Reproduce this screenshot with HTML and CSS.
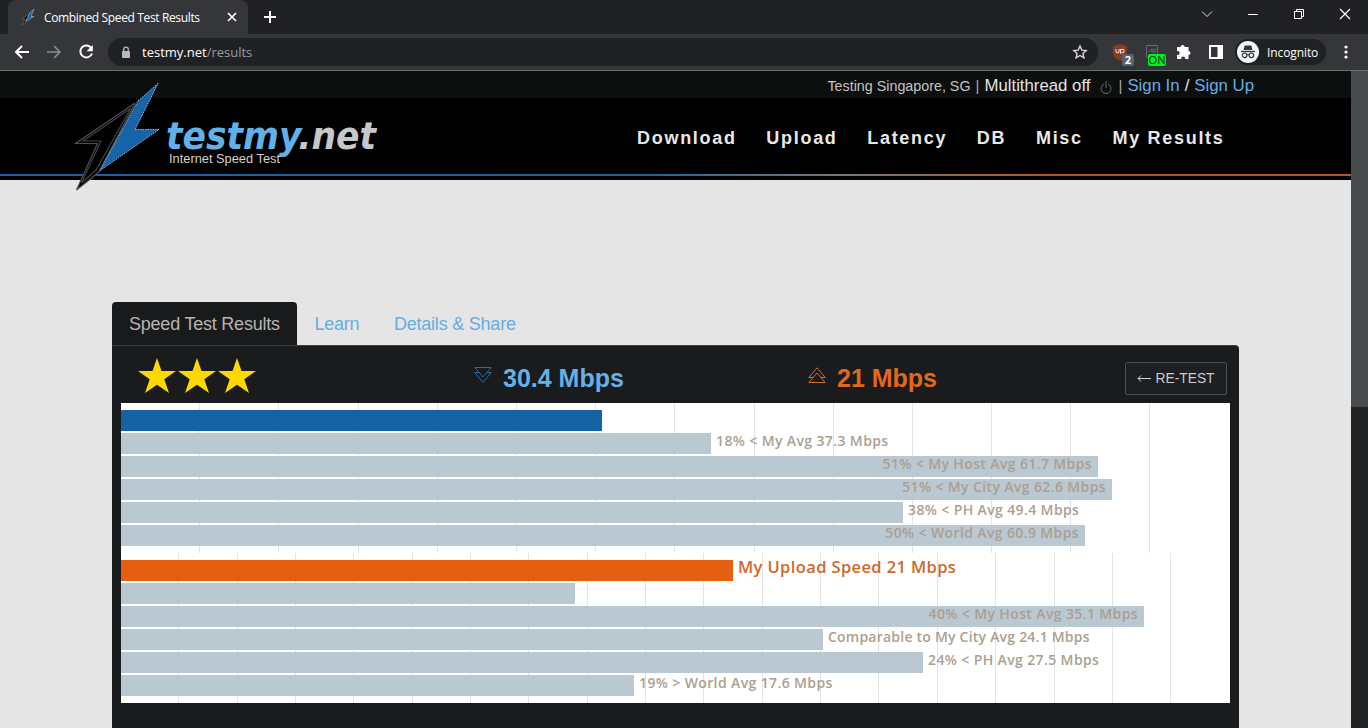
FILE: index.html
```html
<!DOCTYPE html>
<html lang="en">
<head>
  <meta charset="UTF-8">
  <title>Combined Speed Test Results</title>
  <link rel="stylesheet" href="styles.css">
</head>
<body>
  <div class="browser">
    <div class="tab-strip">
      <div class="browser-tab">
        <svg class="favicon" width="16" height="16" viewBox="0 0 16 16">
          <path d="M10 4L2 10l3 0L2 16l4-3z" fill="#0b0c0e" stroke="#777" stroke-width=".6"/>
          <path d="M14 0L10 3.500 5.500 12.500 14 7.500 11 7.500z" fill="#1763a6" stroke="#9db4c4" stroke-width=".6"/>
        </svg>
        <span class="tab-title">Combined Speed Test Results</span>
        <svg class="tab-close" width="10" height="10" viewBox="0 0 10 10"><path d="M1 1l8 8M9 1l-8 8" stroke="#fff" stroke-width="1.700"/></svg>
      </div>
      <svg class="new-tab" width="12" height="12" viewBox="0 0 12 12"><path d="M6 0v12M0 6h12" stroke="#fff" stroke-width="2"/></svg>
      <div class="window-buttons">
        <svg width="12" height="12" viewBox="0 0 12 12"><path d="M1 3.500l5 5 5-5" fill="none" stroke="#ddd"/></svg>
        <svg width="12" height="12" viewBox="0 0 12 12"><path d="M1 6.500h10" stroke="#fff"/></svg>
        <svg width="12" height="12" viewBox="0 0 12 12"><path d="M1.500 3.500h7v7h-7zM3.500 3.500v-2h7v7h-2" fill="none" stroke="#fff"/></svg>
        <svg width="12" height="12" viewBox="0 0 12 12"><path d="M1 1l10 10M11 1L1 11" stroke="#fff" stroke-width="1.200"/></svg>
      </div>
    </div>
    <div class="toolbar">
      <div class="nav-icons">
        <svg width="16" height="16" viewBox="0 0 16 16"><path d="M15 8H2M8 2L2 8l6 6" fill="none" stroke="#fff" stroke-width="2"/></svg>
        <svg width="16" height="16" viewBox="0 0 16 16"><path d="M1 8h13M8 2l6 6-6 6" fill="none" stroke="#8b8d90" stroke-width="1.600"/></svg>
        <svg width="16" height="16" viewBox="0 0 16 16"><path d="M13.400 4.200A6 6 0 1 0 14 9.500" fill="none" stroke="#fff" stroke-width="2"/><path d="M14.800 1v6.200H8.600z" fill="#fff"/></svg>
      </div>
      <div class="address-bar">
        <svg class="lock" width="10" height="13" viewBox="0 0 10 13"><rect x="1" y="5" width="8" height="7" rx="1" fill="#b5b7ba"/><path d="M2.700 5V3.500a2.300 2.300 0 0 1 4.600 0V5" fill="none" stroke="#b5b7ba" stroke-width="1.300"/></svg>
        <span class="url">testmy.net<span class="url-path">/results</span></span>
        <svg class="bookmark" width="16" height="16" viewBox="0 0 16 16"><path d="M8 2l1.800 4.100 4.400.4-3.300 2.900 1 4.400L8 11.500l-3.900 2.300 1-4.400L1.800 6.500l4.400-.4z" fill="none" stroke="#d5d7da" stroke-width="1.400"/></svg>
      </div>
      <div class="extensions">
        <div class="ext">
          <svg width="16" height="17" viewBox="0 0 16 17"><path d="M8 0l7 2.500v6c0 4-3.500 6.500-7 8.500-3.500-2-7-4.500-7-8.500v-6z" fill="#8a3c1c"/><path d="M4 5v2.300a1.500 1.500 0 0 0 3 0V5M8.500 5v4.800" fill="none" stroke="#ddd" stroke-width="1.100"/><circle cx="10.300" cy="7" r="1.800" fill="none" stroke="#ddd" stroke-width="1.100"/></svg>
          <span class="badge badge-count">2</span>
        </div>
        <div class="ext">
          <svg width="16" height="17" viewBox="0 0 16 17"><path d="M2.500 1.500h11v12h-11zM4.500 8l2.500-2.500h2M11 4.500v3.500h-3a1.700 1.700 0 0 1 1.500-2.500" fill="none" stroke="#5f6e70"/></svg>
          <span class="badge badge-on">ON</span>
        </div>
        <svg class="puzzle" width="16" height="16" viewBox="0 0 16 16"><path d="M4.600 3a2 2 0 0 1 4 0H12.500v4a2 2 0 0 1 0 4v4H9.200v-.6a2 2 0 0 0-4 0v.6H1v-4h.7a2 2 0 0 0 0-4H1V3z" fill="#fff"/></svg>
        <svg class="side-panel" width="14" height="14" viewBox="0 0 14 14"><rect x="1" y="1" width="12" height="12" fill="none" stroke="#fff" stroke-width="2"/><rect x="8.500" y="1" width="4.500" height="12" fill="#fff"/></svg>
      </div>
      <div class="profile">
        <svg width="22" height="22" viewBox="0 0 22 22"><circle cx="11" cy="11" r="11" fill="#f2f3f4"/><path d="M7.700 4.500h6.600l1.200 4.500h-9z" fill="#333639"/><path d="M4 10.500h14" stroke="#333639" stroke-width="1.300"/><circle cx="7.600" cy="14.300" r="2.300" fill="none" stroke="#333639" stroke-width="1.200"/><circle cx="14.400" cy="14.300" r="2.300" fill="none" stroke="#333639" stroke-width="1.200"/><path d="M9.900 14q1.100-.8 2.200 0" fill="none" stroke="#333639"/></svg>
        <span>Incognito</span>
      </div>
      <svg class="menu-dots" width="4" height="14" viewBox="0 0 4 14"><circle cx="2" cy="2" r="1.600" fill="#fff"/><circle cx="2" cy="7" r="1.600" fill="#fff"/><circle cx="2" cy="12" r="1.600" fill="#fff"/></svg>
    </div>
  </div>

  <div class="viewport">
    <div class="page">
      <header class="header">
        <div class="top-bar">
          <span class="small">Testing Singapore, SG</span>
          <span class="bar">|</span>
          <span class="multi">Multithread off</span>
          <svg class="power" width="12" height="15" viewBox="0 0 12 15"><path d="M4 4a5 5 0 1 0 4 0M6 1v7" fill="none" stroke="#66686a"/></svg>
          <span class="bar">|</span>
          <a href="#">Sign In</a>
          <span class="slash">/</span>
          <a href="#">Sign Up</a>
        </div>
        <div class="main-bar">
          <nav class="main-nav">
            <a href="#">Download</a>
            <a href="#">Upload</a>
            <a href="#">Latency</a>
            <a href="#">DB</a>
            <a href="#">Misc</a>
            <a href="#">My Results</a>
          </nav>
        </div>
        <div class="header-line"></div>
        <svg class="logo" width="320" height="112" viewBox="0 0 320 112">
          <path d="M63 22L3.500 62.500h22L4.500 109l22.500-18z" fill="#020303" stroke="#4d5054" stroke-width="1.200"/>
          <path d="M58.500 27.500L11 60h18L9.500 102 24 89z" fill="#000" stroke="#3e4144" stroke-width="1.200"/>
          <path d="M86 2.500L66 20 28 89.500 87 48.500H63z" fill="#1864a8"/>
          <path d="M86 2.500L66 20 28 89.500 87 48.500H63z" fill="none" stroke="#9cbbd0" stroke-dasharray="1.500 1"/>
          <text class="logo-name" x="94" y="68" textLength="210" lengthAdjust="spacingAndGlyphs">testmy<tspan class="logo-net">.net</tspan></text>
          <text class="logo-tagline" x="97" y="82" textLength="111" lengthAdjust="spacingAndGlyphs">Internet Speed Test</text>
        </svg>
      </header>

      <main class="content">
        <div class="tabs">
          <a class="tab active" href="#">Speed Test Results</a>
          <a class="tab" href="#">Learn</a>
          <a class="tab" href="#">Details &amp; Share</a>
        </div>
        <section class="panel">
          <div class="summary">
            <svg class="stars" width="120" height="38" viewBox="0 0 120 38">
              <g fill="#ffd800">
                <path id="star" d="M20 1l4.500 13H39l-11.700 8.300L32 36l-12-8.300L8 36l4.700-13.700L1 14h14.500z"/>
                <use href="#star" x="40"/>
                <use href="#star" x="80"/>
              </g>
            </svg>
            <div class="speed download">
              <svg width="18" height="17" viewBox="0 0 18 17"><path d="M.8.500h16.400L9 10zM5 5.500H.8L9 15.500l8.200-10H13" fill="none" stroke="#286ca8"/></svg>
              <span>30.4 Mbps</span>
            </div>
            <div class="speed upload">
              <svg width="18" height="17" viewBox="0 0 18 17"><path d="M.8 15.500h16.400L9 6zM5 10.500H.8L9 .800l8.200 9.700H13" fill="none" stroke="#d5692c"/></svg>
              <span>21 Mbps</span>
            </div>
            <button class="retest"><svg width="14" height="8" viewBox="0 0 14 8"><path d="M14 4.500H1M4 1.500l-3 3 3 3" fill="none" stroke="#d0d4d6"/></svg>RE-TEST</button>
          </div>

          <div class="chart">
            <div class="grid-lines"><i></i><i></i><i></i><i></i><i></i><i></i><i></i><i></i><i></i><i></i><i></i><i></i><i></i><i></i></div>
            <div class="bars">
              <div class="row"><div class="fill blue" style="width: 481px"></div></div>
              <div class="row"><div class="fill" style="width: 590px"></div><span>18% &lt; My Avg 37.3 Mbps</span></div>
              <div class="row"><div class="fill" style="width: 977px"><span>51% &lt; My Host Avg 61.7 Mbps</span></div></div>
              <div class="row"><div class="fill" style="width: 991px"><span>51% &lt; My City Avg 62.6 Mbps</span></div></div>
              <div class="row"><div class="fill" style="width: 782px"></div><span>38% &lt; PH Avg 49.4 Mbps</span></div>
              <div class="row"><div class="fill" style="width: 964px"><span>50% &lt; World Avg 60.9 Mbps</span></div></div>
            </div>
          </div>

          <div class="chart">
            <div class="grid-lines"><i></i><i></i><i></i><i></i><i></i><i></i><i></i><i></i><i></i><i></i><i></i><i></i><i></i><i></i><i></i><i></i><i></i><i></i><i></i></div>
            <div class="bars">
              <div class="row mine"><div class="fill orange" style="width: 612px"></div><span>My Upload Speed 21 Mbps</span></div>
              <div class="row"><div class="fill" style="width: 454px"></div></div>
              <div class="row"><div class="fill" style="width: 1023px"><span>40% &lt; My Host Avg 35.1 Mbps</span></div></div>
              <div class="row comparable"><div class="fill" style="width: 702px"></div><span>Comparable to My City Avg 24.1 Mbps</span></div>
              <div class="row"><div class="fill" style="width: 802px"></div><span>24% &lt; PH Avg 27.5 Mbps</span></div>
              <div class="row"><div class="fill" style="width: 513px"></div><span>19% &gt; World Avg 17.6 Mbps</span></div>
            </div>
          </div>
        </section>
      </main>
    </div>
    <div class="scrollbar"><div class="thumb"></div></div>
  </div>
</body>
</html>
```
FILE: styles.css
```css
* {
  box-sizing: border-box;
}

body {
  margin: 0;
  width: 1368px;
  height: 728px;
  overflow: hidden;
  display: flex;
  flex-direction: column;
  font-family: "Liberation Sans", Arial, sans-serif;
  background-color: #e5e5e5;
}

a {
  color: #66ade4;
  text-decoration: none;
}

svg {
  display: block;
  flex: none;
}

/* Browser window */
.browser {
  height: 71px;
  flex: none;
  background-color: #35363a;
  border-bottom: 1px solid #61736f;
  font-family: "Open Sans", "Noto Sans", sans-serif;
  font-size: 12px;
  color: #fff;
}

.tab-strip {
  height: 34px;
  display: flex;
  align-items: center;
  background-color: #202124;
  padding-left: 8px;
}

.browser-tab {
  width: 240px;
  height: 34px;
  display: flex;
  align-items: center;
  padding: 0 11px 0 12px;
  border-radius: 8px 8px 0 0;
  background-color: #35363a;
}

.tab-title {
  margin-left: 8px;
  letter-spacing: -0.36px;
  white-space: nowrap;
}

.tab-close {
  margin-left: auto;
}

.new-tab {
  margin-left: 16px;
}

.window-buttons {
  margin-left: auto;
  padding: 0 17px 6px 0;
  display: flex;
  gap: 34px;
}

.toolbar {
  height: 36px;
  display: flex;
  align-items: center;
  padding-left: 14px;
}

.nav-icons {
  display: flex;
  gap: 16px;
}

.address-bar {
  width: 990px;
  height: 28px;
  margin-left: 14px;
  padding: 0 10px 0 13px;
  display: flex;
  align-items: center;
  border-radius: 14px;
  background-color: #202124;
}

.url {
  margin-left: 11px;
  font-size: 13px;
}

.url-path {
  color: #9a9da1;
}

.bookmark {
  margin-left: auto;
}

.extensions {
  margin-left: 14px;
  display: flex;
  align-items: center;
}

.ext {
  position: relative;
  width: 32px;
}

.badge {
  position: absolute;
  height: 12px;
  line-height: 12px;
  border-radius: 2px;
  text-align: center;
  font-size: 11px;
}

.badge-count {
  left: 10px;
  top: 10px;
  width: 12px;
  background-color: #566470;
  font-weight: bold;
}

.badge-on {
  left: 4px;
  top: 10px;
  width: 18px;
  background-color: #00f020;
  color: #062a0a;
}

.side-panel {
  margin-left: 17px;
}

.profile {
  width: 91px;
  height: 26px;
  margin-left: 12px;
  padding-left: 2px;
  display: flex;
  align-items: center;
  gap: 8px;
  letter-spacing: -0.1px;
  border-radius: 13px;
  background-color: #202124;
}

.menu-dots {
  margin-left: 18px;
}

/* Page */
.viewport {
  flex: 1;
  min-height: 0;
  display: flex;
}

.page {
  width: 1351px;
}

.scrollbar {
  width: 17px;
  background-color: #202224;
}

.thumb {
  height: 336px;
  background-color: #484b4d;
}

.header {
  position: relative;
  height: 109px;
  background-color: #000;
}

.top-bar {
  height: 27px;
  padding: 0 97px 0 0;
  display: flex;
  justify-content: flex-end;
  align-items: baseline;
  background-color: #0d0e0e;
  color: #e4e4e4;
  font-size: 16.8px;
  line-height: 29px;
}

.top-bar .small {
  font-size: 14.3px;
  color: #c4c4c4;
}

.top-bar .bar {
  margin: 0 5px;
  font-size: 15px;
  color: #aaa;
}

.top-bar .slash {
  margin: 0 5px;
}

.power {
  margin: 5px 1px 0 10px;
  align-self: center;
}

.main-bar {
  height: 76px;
}

.main-nav {
  padding: 30px 126.5px 0 0;
  display: flex;
  justify-content: flex-end;
  gap: 29.7px;
}

.main-nav a {
  color: #e8e8e8;
  font-size: 18px;
  line-height: 21px;
  font-weight: bold;
  letter-spacing: 1.7px;
}

.header-line {
  height: 2px;
  background: linear-gradient(to right, #1f5e9e 0%, #28609a 48%, #777 62%, #b0562a 78%, #b5562a 100%);
}

.logo {
  position: absolute;
  left: 72px;
  top: 10px;
}

.logo-name {
  font-family: "DejaVu Sans", sans-serif;
  font-size: 38px;
  font-weight: bold;
  font-style: italic;
  fill: #62b0e8;
}

.logo-net {
  fill: #c6c8ca;
}

.logo-tagline {
  font-size: 12px;
  fill: #d2d2d2;
}

/* Results */
.content {
  padding: 122px 112px 0;
}

.tabs {
  display: flex;
  gap: 0.6px;
}

.tab {
  height: 43px;
  padding: 0 17px;
  line-height: 44px;
  font-size: 18px;
  letter-spacing: -0.22px;
}

.tab.active {
  border-radius: 4px 4px 0 0;
  background-color: #191a1b;
  color: #b8b4ae;
}

.panel {
  height: 400px;
  padding: 0 9px;
  border-top: 1px solid #3a3d3f;
  border-radius: 0 4px 0 0;
  background-color: #191b1c;
}

.summary {
  height: 57px;
  display: flex;
  align-items: center;
}

.stars {
  margin: 3px 0 0 16px;
}

.speed {
  display: flex;
  align-items: center;
  gap: 11px;
  font-size: 25px;
  font-weight: bold;
  padding-top: 7px;
}

.speed svg {
  margin-bottom: 6px;
}

.download {
  width: 334px;
  margin-left: 217px;
  color: #66b0e8;
}

.upload {
  color: #e4671e;
}

.retest {
  width: 102px;
  height: 33px;
  margin: 7px 3px 0 auto;
  padding: 0;
  display: flex;
  align-items: center;
  justify-content: center;
  gap: 4px;
  border: 1px solid #4c5053;
  border-radius: 2px;
  background-color: #1d1f21;
  color: #c9cdd0;
  font-family: "Liberation Sans", Arial, sans-serif;
  font-size: 13.8px;
}

.chart {
  height: 150px;
  display: grid;
  background-color: #fff;
}

.grid-lines,
.bars {
  grid-area: 1 / 1;
}

.grid-lines {
  display: flex;
  margin-right: 0.4px;
}

.grid-lines i {
  flex: 1;
  border-right: 1px solid #e3e3e6;
}

.grid-lines i:last-child {
  border-right-color: #fff;
}

.bars {
  padding-top: 7px;
  display: flex;
  flex-direction: column;
  gap: 2px;
  z-index: 1;
}

.row {
  height: 21px;
  display: flex;
  font-family: "Open Sans", "Noto Sans", sans-serif;
  font-size: 14px;
  font-weight: 600;
  line-height: 15px;
  letter-spacing: 0.38px;
  color: #aba091;
  white-space: nowrap;
}

.row > span {
  margin-left: 5px;
}

.fill {
  height: 21px;
  padding-right: 6px;
  text-align: right;
  background-color: #bac8d1;
}

.fill.blue {
  background-color: #1562a5;
}

.fill.orange {
  background-color: #e55f12;
}

.row.mine {
  font-size: 16.5px;
  line-height: 13px;
  color: #cf682b;
}

.row.comparable {
  letter-spacing: 0.22px;
}
```
